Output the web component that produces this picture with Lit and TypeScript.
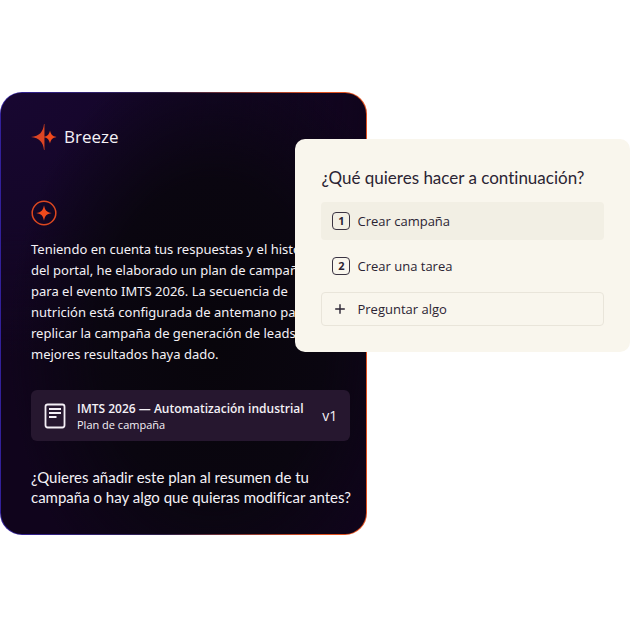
import { LitElement, html, css, svg } from "lit";
import { customElement } from "lit/decorators.js";
import { classMap } from "lit/directives/class-map.js";

const breezeLogo = svg`
  <svg class="logo" viewBox="0 0 26 26" aria-hidden="true">
    <path d="M13 0C12.200 8 8.500 12 0 13C8.500 14 12.200 18 13 26Z" fill="#dc4424"/>
    <path d="M13 0H13.800V26H13Z" fill="#8a2d22"/>
    <path d="M19 6.500C20 10.600 21.200 12 25.500 13C21.200 14 20 15.400 19 19.500C18 15.400 16.800 14 12.500 13C16.800 12 18 10.600 19 6.500Z" fill="#f04a1c"/>
  </svg>`;

const breezeBadge = svg`
  <svg class="badge" viewBox="0 0 26 26" aria-hidden="true">
    <circle cx="13" cy="13" r="11.800" fill="none" stroke="#dc4820" stroke-width="1.500"/>
    <path d="M13 5.200C14 10.500 15.500 12 20.800 13C15.500 14 14 15.500 13 20.800C12 15.500 10.500 14 5.200 13C10.500 12 12 10.500 13 5.200Z" fill="#f04a1c"/>
  </svg>`;

const documentIcon = svg`
  <svg class="doc" viewBox="0 0 22 26" fill="none" stroke="#f4eff6" aria-hidden="true">
    <rect x="1.500" y="1.500" width="19" height="23" rx="2.200" stroke-width="1.800"/>
    <path d="M5 6H17M5 10H17M5 14H12.500" stroke-width="1.800"/>
  </svg>`;

const plusIcon = svg`
  <svg class="plus" viewBox="0 0 18 18" fill="none" stroke="#2b2433" stroke-width="1.400" aria-hidden="true">
    <path d="M8 4.200V13.800M3.200 9H12.800"/>
  </svg>`;

interface Option {
  key?: string;
  label: string;
  kind: "active" | "plain" | "outlined";
}

const options: Option[] = [
  { key: "1", label: "Crear campaña", kind: "active" },
  { key: "2", label: "Crear una tarea", kind: "plain" },
  { label: "Preguntar algo", kind: "outlined" },
];

@customElement("breeze-chat")
export class BreezeChat extends LitElement {
  static styles = css`
    :host {
      display: block;
      box-sizing: border-box;
      padding: 31px 16px 27px 30px;
      border: 1px solid transparent;
      border-radius: 22px;
      color: #f4f1f6;
      background:
        radial-gradient(ellipse 56% 66% at 58% 56%, #08050b 0%, #0a0610 55%, transparent 100%) padding-box,
        radial-gradient(ellipse 100% 60% at 0% 0%, #180731 0%, #140628 50%, transparent 100%) padding-box,
        linear-gradient(#10041c, #10041c) padding-box,
        linear-gradient(90deg, #32209a 0%, #2f2148 45%, #e0501f 88%, #e0501f 100%) border-box;
    }
    .brand {
      display: flex;
      align-items: center;
      gap: 7px;
      font-size: 17px;
      line-height: 26px;
    }
    .logo, .badge {
      display: block;
      width: 26px;
      height: 26px;
    }
    .badge { margin-top: 50px; }
    p { margin: 0; white-space: nowrap; }
    .answer {
      margin-top: 13px;
      font-family: "Noto Sans", sans-serif;
      font-size: 13px;
      line-height: 21px;
    }
    .plan {
      display: flex;
      align-items: center;
      box-sizing: border-box;
      height: 51px;
      margin-top: 25px;
      padding: 0 13px;
      border-radius: 6px;
      background: #26172f;
    }
    .doc { width: 22px; height: 26px; flex: none; }
    .info { flex: 1; margin-left: 11px; white-space: nowrap; }
    .name { font-size: 12px; line-height: 17px; font-weight: 600; }
    .type { font-size: 11px; line-height: 15px; }
    .version { font-size: 14px; }
    .question {
      margin-top: 26px;
      font-family: Lato, sans-serif;
      font-size: 15px;
      font-variant-ligatures: none;
      line-height: 20px;
    }
  `;

  render() {
    return html`
      <header class="brand">${breezeLogo}<span>Breeze</span></header>
      ${breezeBadge}
      <p class="answer">
        Teniendo en cuenta tus respuestas y el historial<br />
        del portal, he elaborado un plan de campaña<br />
        para el evento IMTS 2026. La secuencia de<br />
        nutrición está configurada de antemano para<br />
        replicar la campaña de generación de leads que<br />
        mejores resultados haya dado.
      </p>
      <div class="plan">
        ${documentIcon}
        <div class="info">
          <div class="name">IMTS 2026 — Automatización industrial</div>
          <div class="type">Plan de campaña</div>
        </div>
        <span class="version">v1</span>
      </div>
      <p class="question">
        ¿Quieres añadir este plan al resumen de tu<br />
        campaña o hay algo que quieras modificar antes?
      </p>
    `;
  }
}

@customElement("next-steps")
export class NextSteps extends LitElement {
  static styles = css`
    :host {
      display: block;
      box-sizing: border-box;
      padding: 26px;
      border-radius: 10px;
      background: #f9f6ed;
      color: #2b2433;
    }
    h2 {
      margin: 0 0 11px;
      font-family: Lato, sans-serif;
      font-size: 17px;
      font-variant-ligatures: none;
      line-height: 26px;
      font-weight: 400;
      white-space: nowrap;
    }
    .list { display: flex; flex-direction: column; gap: 7px; }
    .option {
      display: flex;
      align-items: center;
      gap: 7px;
      box-sizing: border-box;
      height: 38px;
      padding: 0 10px;
      border: 1px solid transparent;
      border-radius: 4px;
      background: transparent;
      color: inherit;
      font: inherit;
      font-size: 13px;
      text-align: left;
    }
    .active { background: #f2efe4; }
    .outlined { height: 34px; border-color: #e9e5da; }
    .key {
      box-sizing: border-box;
      width: 18px;
      height: 18px;
      border: 1px solid #3a3342;
      border-radius: 4px;
      font-size: 11px;
      line-height: 16px;
      font-weight: 700;
      text-align: center;
    }
    .plus { width: 18px; height: 18px; }
  `;

  render() {
    return html`
      <h2>¿Qué quieres hacer a continuación?</h2>
      <div class="list">
        ${options.map(
          (o) => html`
            <button type="button" class=${classMap({ option: true, [o.kind]: true })}>
              ${o.key ? html`<span class="key">${o.key}</span>` : plusIcon}
              <span>${o.label}</span>
            </button>
          `
        )}
      </div>
    `;
  }
}

@customElement("app-root")
export class AppRoot extends LitElement {
  static styles = css`
    :host {
      display: block;
      min-height: 100vh;
      box-sizing: border-box;
      padding: 92px 0;
      background: #ffffff;
      font-family: "Open Sans", "Noto Sans", sans-serif;
    }
    .stage { position: relative; }
    .chat { width: 58.3%; }
    .steps {
      position: absolute;
      top: 47px;
      right: 0;
      width: 53.1%;
    }
  `;

  render() {
    return html`
      <main class="stage">
        <breeze-chat class="chat"></breeze-chat>
        <next-steps class="steps"></next-steps>
      </main>
    `;
  }
}
